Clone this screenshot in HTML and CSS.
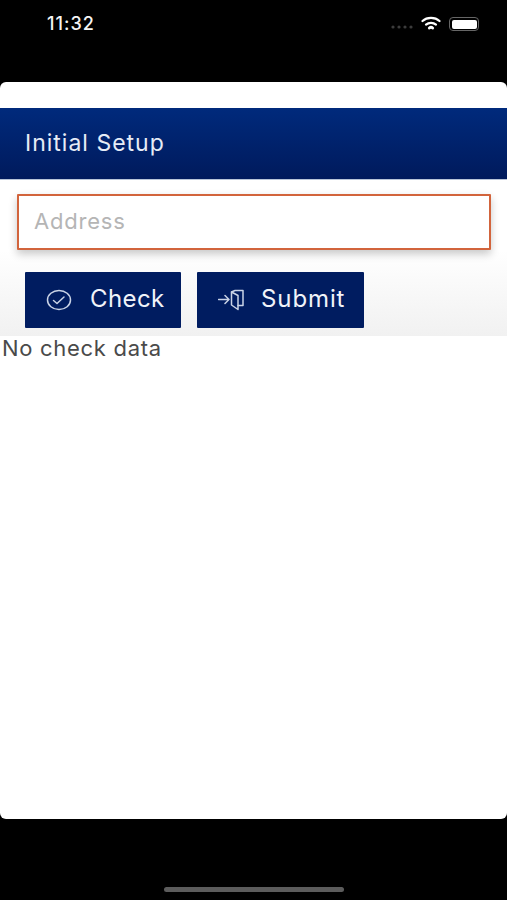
FILE: index.html
```html
<!DOCTYPE html>
<html lang="en">
  <head>
    <meta charset="UTF-8" />
    <meta name="viewport" content="width=device-width, initial-scale=1.0" />
    <title>Initial Setup</title>
    <link rel="stylesheet" href="styles.css">
  </head>
  <body>
    <div class="status-bar">
      <span class="time">11:32</span>
      <div class="status-icons">
        <svg class="signal" width="22" height="4" viewBox="0 0 22 4"><g fill="#3c3c3c"><circle cx="2" cy="2" r="1.6"/><circle cx="8" cy="2" r="1.6"/><circle cx="14" cy="2" r="1.6"/><circle cx="20" cy="2" r="1.6"/></g></svg>
        <svg class="wifi" width="20" height="15" viewBox="0 0 20 15" fill="none" stroke="#fff" stroke-width="2.2" stroke-linecap="round">
          <path d="M1.5 5 C6 0.8 14 0.8 18.5 5"/>
          <path d="M5 8.6 C7.8 6.2 12.2 6.2 15 8.6"/>
          <path d="M8.4 12 C9.3 11.2 10.7 11.2 11.6 12" stroke-width="3"/>
        </svg>
        <div class="battery"><div class="battery-fill"></div></div>
      </div>
    </div>

    <div class="card">
      <div class="card-top"></div>
      <div class="header">Initial Setup</div>
      <div class="form">
        <input class="address" type="text" placeholder="Address" />
        <div class="actions">
          <button class="btn btn-check">
            <svg width="26" height="22" viewBox="0 0 26 22" fill="none" stroke="#c9d3e6" stroke-width="1.5" stroke-linecap="round" stroke-linejoin="round">
              <ellipse cx="13" cy="11" rx="11.5" ry="9.5"/>
              <path d="M7.5 11.5 L11 14.5 L18 8"/>
            </svg>
            <span class="label">Check</span>
          </button>
          <button class="btn btn-submit">
            <svg width="26" height="22" viewBox="0 0 26 22" fill="none" stroke="#c9d3e6" stroke-width="1.5" stroke-linecap="round" stroke-linejoin="round">
              <path d="M0.5 10.5 H11 M7 6.5 L11 10.5 L7 14.5"/>
              <path d="M13.5 3 L17 1.5 H25 V16.5 H20"/>
              <path d="M13.5 3 V16 L20 20.5 V6.5 Z"/>
            </svg>
            <span class="label">Submit</span>
          </button>
        </div>
      </div>
      <p class="no-data">No check data</p>
    </div>

    <div class="home-area">
      <div class="home-bar"></div>
    </div>
  </body>
</html>
```

FILE: styles.css
```css
* {
  box-sizing: border-box;
}
html,
body {
  margin: 0;
  height: 900px;
  overflow: hidden;
  background: #000;
}
body {
  display: flex;
  flex-direction: column;
  font-family: Inter, Roboto, "Liberation Sans", sans-serif;
}
.status-bar {
  height: 82px;
  display: flex;
  justify-content: space-between;
  align-items: flex-start;
  padding: 13px 28px 0 47px;
  color: #f4f4f4;
}
.time {
  font-size: 18px;
  font-weight: 500;
  line-height: 22px;
  letter-spacing: 1px;
}
.status-icons {
  display: flex;
  align-items: center;
  gap: 8px;
  height: 22px;
}
.signal {
  margin-top: 5px;
}
.wifi {
  margin-top: -2px;
}
.battery {
  width: 30px;
  height: 14px;
  border: 1.5px solid #666;
  border-radius: 4px;
  padding: 1.5px;
}
.battery-fill {
  height: 100%;
  background: #fff;
  border-radius: 2px;
}
.card {
  height: 737px;
  background: #fff;
  border-radius: 6px;
  overflow: hidden;
}
.card-top {
  height: 26px;
}
.header {
  height: 72px;
  display: flex;
  align-items: center;
  padding: 0 0 1px 25px;
  font-size: 23px;
  letter-spacing: 1px;
  color: #e6ecf6;
  background: linear-gradient(#002a7c, #001a5c);
  border-bottom: 1px solid #b8c4d8;
}
.form {
  height: 156px;
  padding: 14px 16px 0 17px;
  background: linear-gradient(#fff 45%, #f1f1f1);
}
.address {
  display: block;
  width: 100%;
  height: 56px;
  padding: 0 15px 2px;
  border: 2px solid #d2643c;
  border-radius: 1px;
  outline: none;
  background: #fff;
  box-shadow: 0 4px 8px rgba(0, 0, 0, 0.22);
  font-family: inherit;
  font-size: 22px;
  letter-spacing: 0.8px;
}
.address::placeholder {
  color: #b5b5b5;
}
.actions {
  display: flex;
  gap: 16px;
  margin: 22px 0 0 8px;
}
.btn {
  height: 56px;
  display: flex;
  align-items: center;
  border: 0;
  border-radius: 1px;
  background: #001c60;
  color: #f0f3f9;
  font-family: inherit;
  font-size: 24px;
  letter-spacing: 0.4px;
}
.btn svg {
  flex: none;
}
.label {
  padding-bottom: 3px;
}
.btn-check {
  width: 156px;
  padding: 0 0 0 21px;
  gap: 18px;
}
.btn-submit {
  width: 167px;
  padding: 0 0 0 21px;
  gap: 17px;
  letter-spacing: 0.9px;
}
.no-data {
  margin: 0;
  padding: 0 0 2px 2px;
  font-size: 22px;
  line-height: 24px;
  letter-spacing: 0.7px;
  color: #4a4a4a;
}
.home-area {
  flex: 1;
  display: flex;
  justify-content: center;
  padding-top: 68px;
}
.home-bar {
  width: 180px;
  height: 5px;
  border-radius: 3px;
  background: #5c5c5c;
}
```
